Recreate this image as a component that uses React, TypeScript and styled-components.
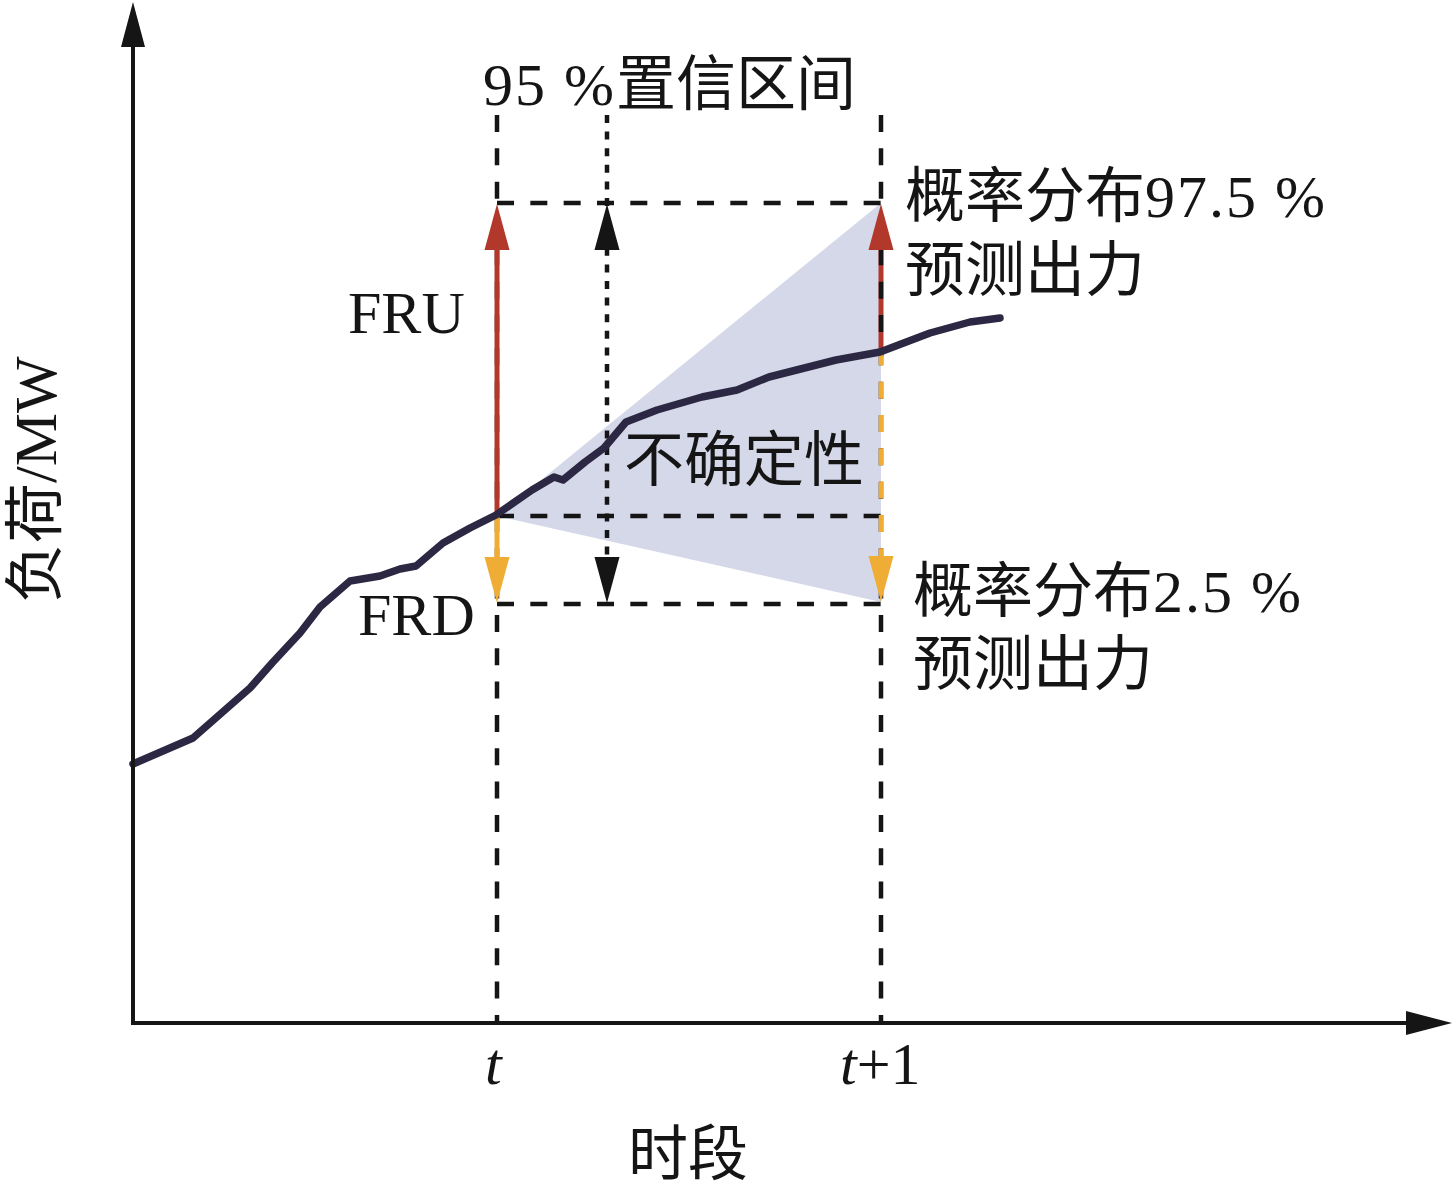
import React from 'react';
import styled, { createGlobalStyle } from 'styled-components';

const GlobalStyle = createGlobalStyle`
  html, body {
    margin: 0;
    padding: 0;
    background: #ffffff;
  }
`;

const Page = styled.div`
  width: 1453px;
  height: 1195px;
  background: #ffffff;
  overflow: hidden;
`;

const Chart = styled.svg`
  display: block;
  width: 1453px;
  height: 1195px;
`;

const AxisLine = styled.line`
  stroke: #151515;
  stroke-width: 4;
`;

const Head = styled.polygon<{ $color: string }>`
  fill: ${({ $color }) => $color};
`;

const GuideLine = styled.line<{ $dotted?: boolean; $color?: string }>`
  stroke: ${({ $color }) => $color || '#151515'};
  stroke-width: 4.5;
  stroke-dasharray: ${({ $dotted }) => ($dotted ? '8 8.6' : '17 16.33')};
`;

const Shaft = styled.line<{ $color: string }>`
  stroke: ${({ $color }) => $color};
  stroke-width: 5;
`;

const Band = styled.polygon`
  fill: #d4d8e8;
`;

const LoadCurve = styled.polyline`
  fill: none;
  stroke: #2c2843;
  stroke-width: 7.5;
  stroke-linejoin: round;
  stroke-linecap: round;
`;

const Label = styled.text<{ $italic?: boolean }>`
  font-family: "Liberation Serif", "Noto Sans CJK SC", serif;
  font-size: 60px;
  font-style: ${({ $italic }) => ($italic ? 'italic' : 'normal')};
  fill: #151515;
`;

const Num = styled.tspan`
  letter-spacing: 2px;
`;

const RED = '#b3382c';
const ORANGE = '#f0ad36';
const BLACK = '#151515';

// arrow head pointing up (dir -1) or down (dir 1), tip at y
function ArrowHead({ x, y, dir, color }: { x: number; y: number; dir: 1 | -1; color: string }) {
  const base = y - dir * 46;
  return <Head $color={color} points={`${x},${y} ${x - 12.5},${base} ${x + 12.5},${base}`} />;
}

const curve: [number, number][] = [
  [133, 764], [193, 738], [250, 688], [273, 662], [300, 633], [320, 607],
  [350, 581], [380, 576], [400, 569], [416, 566], [443, 543], [470, 528],
  [496, 515], [532, 490], [554, 477], [563, 480], [585, 462], [604, 448],
  [626, 422], [657, 410], [702, 397], [737, 390], [769, 377], [836, 360],
  [880, 352], [930, 333], [970, 322], [1000, 318],
];

export default function App() {
  const tX = 497;
  const t1X = 881;
  const midX = 607;
  const top = 203;
  const mid = 516;
  const low = 604;

  return (
    <Page>
      <GlobalStyle />
      <Chart viewBox="0 0 1453 1195">
        {/* uncertainty band */}
        <Band points={`${tX},${mid} ${t1X},${top} ${t1X},602`} />

        {/* red shaft under the right dashed line */}
        <Shaft $color={RED} x1={t1X} y1={248} x2={t1X} y2={356} />

        {/* guides */}
        <GuideLine x1={tX} y1={115} x2={tX} y2={1024} />
        <GuideLine x1={t1X} y1={115} x2={t1X} y2={1024} />
        <GuideLine $dotted x1={midX} y1={115} x2={midX} y2={590} />
        <GuideLine x1={tX} y1={top} x2={t1X + 2} y2={top} />
        <GuideLine x1={tX} y1={mid} x2={t1X + 2} y2={mid} />
        <GuideLine x1={tX} y1={low} x2={t1X + 2} y2={low} />

        {/* orange dashes on the right line */}
        <GuideLine $color={ORANGE} x1={t1X} y1={348.3} x2={t1X} y2={560} />

        {/* FRU / FRD arrows at t */}
        <Shaft $color={RED} x1={tX} y1={mid} x2={tX} y2={240} />
        <ArrowHead x={tX} y={204} dir={-1} color={RED} />
        <Shaft $color={ORANGE} x1={tX} y1={mid} x2={tX} y2={565} />
        <ArrowHead x={tX} y={603} dir={1} color={ORANGE} />

        {/* confidence interval arrows */}
        <ArrowHead x={midX} y={204} dir={-1} color={BLACK} />
        <ArrowHead x={midX} y={603} dir={1} color={BLACK} />

        {/* right side arrows */}
        <ArrowHead x={t1X} y={204} dir={-1} color={RED} />
        <ArrowHead x={t1X} y={602} dir={1} color={ORANGE} />

        <LoadCurve points={curve.map(([x, y]) => `${x},${y}`).join(' ')} />

        {/* axes */}
        <AxisLine x1={133} y1={30} x2={133} y2={1025} />
        <AxisLine x1={131} y1={1023} x2={1420} y2={1023} />
        <Head $color={BLACK} points="133,2 121,47 145,47" />
        <Head $color={BLACK} points="1452,1023 1406,1011 1406,1035" />

        {/* labels */}
        <Label x={483} y={105}><Num>95 %</Num>置信区间</Label>
        <Label x={348} y={333}>FRU</Label>
        <Label x={358} y={635}>FRD</Label>
        <Label x={624} y={481}>不确定性</Label>
        <Label x={905} y={217}>概率分布<Num>97.5 %</Num></Label>
        <Label x={905} y={291}>预测出力</Label>
        <Label x={913} y={612}>概率分布<Num>2.5 %</Num></Label>
        <Label x={913} y={685}>预测出力</Label>
        <Label $italic x={485} y={1084}>t</Label>
        <Label x={840} y={1084}>
          <tspan fontStyle="italic">t</tspan>+1
        </Label>
        <Label x={628} y={1175}>时段</Label>
        <Label transform="translate(56,603) rotate(-90)">负荷/MW</Label>
      </Chart>
    </Page>
  );
}
